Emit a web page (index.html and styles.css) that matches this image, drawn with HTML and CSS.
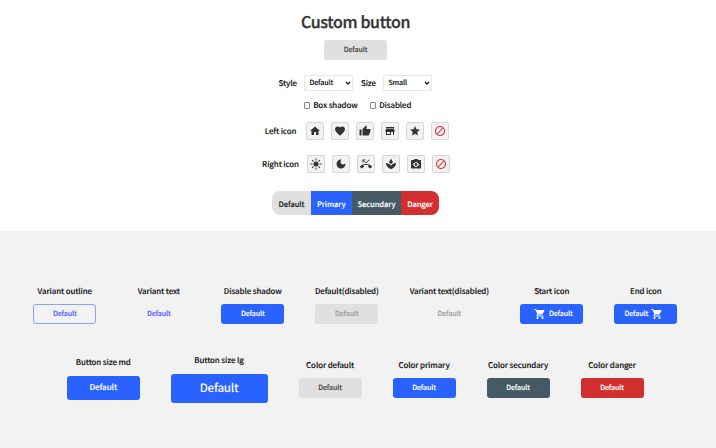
FILE: index.html
```html
<!DOCTYPE html>
<html lang="en">
<head>
<meta charset="utf-8">
<title>Custom button</title>
<link rel="stylesheet" href="styles.css">
</head>
<body>
<svg class="defs" aria-hidden="true">
  <symbol id="home" viewBox="0 0 24 24"><path d="M10 20v-6h4v6h5v-8h3L12 3 2 12h3v8z"/></symbol>
  <symbol id="heart" viewBox="0 0 24 24"><path d="M12 21.35l-1.45-1.32C5.4 15.36 2 12.28 2 8.5 2 5.42 4.42 3 7.5 3c1.74 0 3.41.81 4.5 2.09C13.09 3.81 14.76 3 16.5 3 19.58 3 22 5.42 22 8.5c0 3.78-3.4 6.86-8.55 11.54L12 21.35z"/></symbol>
  <symbol id="thumb" viewBox="0 0 24 24"><path d="M1 21h4V9H1v12zm22-11c0-1.1-.9-2-2-2h-6.31l.95-4.57.03-.32c0-.41-.17-.79-.44-1.06L14.17 1 7.59 7.59C7.22 7.95 7 8.45 7 9v10c0 1.1.9 2 2 2h9c.83 0 1.54-.5 1.84-1.22l3.02-7.05c.09-.23.14-.47.14-.73v-2z"/></symbol>
  <symbol id="store" viewBox="0 0 24 24"><path d="M20 4H4v2h16V4zm1 10v-2l-1-5H4l-1 5v2h1v6h10v-6h4v6h2v-6h1zm-9 4H6v-4h6v4z"/></symbol>
  <symbol id="star" viewBox="0 0 24 24"><path d="M12 17.27L18.18 21l-1.64-7.03L22 9.24l-7.19-.61L12 2 9.19 8.63 2 9.24l5.46 4.73L5.82 21z"/></symbol>
  <symbol id="block" viewBox="0 0 24 24"><path d="M12 2C6.48 2 2 6.48 2 12s4.480 10 10 10 10-4.480 10-10S17.520 2 12 2zM4 12c0-4.420 3.580-8 8-8 1.850 0 3.550.63 4.900 1.690L5.690 16.900C4.630 15.550 4 13.850 4 12zm8 8c-1.850 0-3.550-.63-4.900-1.690L18.310 7.100C19.370 8.450 20 10.150 20 12c0 4.420-3.580 8-8 8z"/></symbol>
  <symbol id="sun" viewBox="0 0 24 24"><circle cx="12" cy="12" r="5"/><path d="M11 1h2v4h-2zM11 19h2v4h-2zM1 11h4v2H1zM19 11h4v2h-4zM4.930 3.510l2.830 2.830-1.420 1.420-2.830-2.830zM17.660 16.240l2.830 2.830-1.420 1.420-2.830-2.830zM20.490 4.930l-2.830 2.830-1.420-1.420 2.830-2.830zM7.760 17.660l-2.830 2.830-1.420-1.420 2.830-2.830z"/></symbol>
  <symbol id="moon" viewBox="0 0 24 24"><path d="M12 3c-4.970 0-9 4.030-9 9s4.030 9 9 9 9-4.030 9-9c0-.46-.04-.92-.1-1.360-.98 1.370-2.580 2.260-4.400 2.260-2.980 0-5.400-2.420-5.400-5.400 0-1.810.89-3.420 2.260-4.400C12.920 3.040 12.460 3 12 3z"/></symbol>
  <symbol id="missed" viewBox="0 0 24 24"><path d="M6.500 5.500L12 11l7-7-1-1-6 6-4.500-4.500H11V3H5v6h1.500V5.500zm17.210 11.170C20.660 13.780 16.540 12 12 12 7.460 12 3.340 13.780.29 16.670c-.18.18-.29.43-.29.710s.11.530.29.710l2.480 2.480c.18.18.43.29.710.290.27 0 .52-.11.700-.28.79-.74 1.690-1.360 2.660-1.850.33-.16.560-.50.560-.90v-3.100C8.850 14.250 10.400 14 12 14s3.150.25 4.600.720v3.100c0 .39.23.74.56.90.98.49 1.870 1.120 2.670 1.850.18.18.43.28.700.28.28 0 .53-.11.710-.29l2.480-2.480c.18-.18.29-.43.290-.710s-.12-.52-.30-.70z"/></symbol>
  <symbol id="spa" viewBox="0 0 24 24"><path d="M15.490 9.630c-.18-2.790-1.310-5.510-3.430-7.630-2.140 2.140-3.320 4.860-3.550 7.630 1.280.68 2.460 1.560 3.490 2.630 1.030-1.060 2.210-1.940 3.490-2.630zM12 15.450C9.850 12.170 6.180 10 2 10c0 5.320 3.360 9.820 8.030 11.490.63.23 1.290.40 1.970.51.68-.12 1.330-.29 1.970-.51C18.640 19.820 22 15.320 22 10c-4.180 0-7.850 2.170-10 5.450z"/></symbol>
  <symbol id="camera" viewBox="0 0 24 24"><path fill-rule="evenodd" d="M20 4h-3.170L15 2H9L7.170 4H4c-1.100 0-2 .90-2 2v13c0 1.100.90 2 2 2h16c1.100 0 2-.90 2-2V6c0-1.100-.90-2-2-2zm-8 14c-2.800 0-5-2.200-5-5H4.500L8 9.500l3.500 3.500H9c0 1.650 1.350 3 3 3 .46 0 .90-.11 1.290-.29l1.110 1.110C13.700 17.250 12.880 18 12 18zm4-1.500L12.500 13H15c0-1.650-1.350-3-3-3-.46 0-.89.10-1.280.29L9.610 9.180C10.300 8.440 11.130 8 12 8c2.760 0 5 2.240 5 5h2.500L16 16.500z"/></symbol>
  <symbol id="cart" viewBox="0 0 24 24"><path d="M7 18c-1.100 0-1.990.90-1.990 2S5.900 22 7 22s2-.90 2-2-.90-2-2-2zM1 2v2h2l3.600 7.590-1.350 2.450c-.16.28-.25.61-.25.960 0 1.100.90 2 2 2h12v-2H7.420c-.14 0-.25-.11-.25-.25l.03-.12.90-1.630h7.450c.75 0 1.410-.41 1.750-1.030l3.580-6.490c.08-.14.12-.31.12-.48 0-.55-.45-1-1-1H5.210l-.94-2H1zm16 16c-1.100 0-1.990.90-1.990 2s.89 2 1.990 2 2-.90 2-2-.90-2-2-2z"/></symbol>
  <symbol id="chevron" viewBox="0 0 10 10"><path d="M1.500 3L5 6.700 8.500 3" fill="none" stroke="currentColor" stroke-width="2"/></symbol>
</svg>

<main class="playground">
  <h1>Custom button</h1>
  <button class="btn default">Default</button>

  <div class="selects">
    <span>Style</span>
    <div class="select">Default<svg><use href="#chevron"/></svg></div>
    <span>Size</span>
    <div class="select">Small<svg><use href="#chevron"/></svg></div>
  </div>

  <div class="checks">
    <label><i class="box"></i>Box shadow</label>
    <label><i class="box"></i>Disabled</label>
  </div>

  <div class="icons">
    <span>Left icon</span>
    <button><svg><use href="#home"/></svg></button>
    <button><svg><use href="#heart"/></svg></button>
    <button><svg><use href="#thumb"/></svg></button>
    <button><svg><use href="#store"/></svg></button>
    <button><svg><use href="#star"/></svg></button>
    <button class="none"><svg><use href="#block"/></svg></button>
  </div>
  <div class="icons second">
    <span>Right icon</span>
    <button><svg><use href="#sun"/></svg></button>
    <button><svg><use href="#moon"/></svg></button>
    <button><svg><use href="#missed"/></svg></button>
    <button><svg><use href="#spa"/></svg></button>
    <button><svg><use href="#camera"/></svg></button>
    <button class="none"><svg><use href="#block"/></svg></button>
  </div>

  <div class="colors">
    <button class="default">Default</button>
    <button class="primary">Primary</button>
    <button class="secondary">Secundary</button>
    <button class="danger">Danger</button>
  </div>
</main>

<section class="examples">
  <div class="row">
    <div class="item"><p>Variant outline</p><button class="btn outline">Default</button></div>
    <div class="item"><p>Variant text</p><button class="btn text">Default</button></div>
    <div class="item"><p>Disable shadow</p><button class="btn primary">Default</button></div>
    <div class="item"><p>Default(disabled)</p><button class="btn default off">Default</button></div>
    <div class="item wide"><p>Variant text(disabled)</p><button class="btn text off">Default</button></div>
    <div class="item"><p>Start icon</p><button class="btn primary start"><svg><use href="#cart"/></svg>Default</button></div>
    <div class="item"><p>End icon</p><button class="btn primary end">Default<svg><use href="#cart"/></svg></button></div>
  </div>
  <div class="row sizes">
    <div class="item"><p>Button size md</p><button class="btn primary md">Default</button></div>
    <div class="item"><p>Button size lg</p><button class="btn primary lg">Default</button></div>
    <div class="item"><p>Color default</p><button class="btn default">Default</button></div>
    <div class="item"><p>Color primary</p><button class="btn primary">Default</button></div>
    <div class="item"><p>Color secundary</p><button class="btn secondary">Default</button></div>
    <div class="item"><p>Color danger</p><button class="btn danger">Default</button></div>
  </div>
</section>
</body>
</html>
```

FILE: styles.css
```css
* { box-sizing: border-box; }

body {
  margin: 0;
  height: 448px;
  overflow: hidden;
  display: flex;
  flex-direction: column;
  background: #fff;
  color: #111;
  font: 500 7.9px/12px "Noto Sans CJK JP", sans-serif;
  letter-spacing: -0.09px;
  -webkit-text-stroke: 0.12px currentColor;
  text-rendering: geometricPrecision;
}

button, p, h1 { margin: 0; padding: 0; font: inherit; color: inherit; }
button { border: 0; white-space: nowrap; text-rendering: inherit; letter-spacing: inherit; }
svg { fill: currentColor; flex: none; }
.defs { display: none; }

.playground {
  height: 230.5px;
  flex: none;
  display: flex;
  flex-direction: column;
  align-items: center;
  padding: 9px 5px 0 0;
  border-top: 1px solid #fffcf3;
}

h1 {
  font-size: 16px;
  line-height: 22px;
  letter-spacing: -0.36px;
  -webkit-text-stroke-width: 0.3px;
  color: #333;
  margin-bottom: 8px;
}

.btn {
  display: flex;
  align-items: center;
  justify-content: center;
  width: 63px;
  height: 19.5px;
  border-radius: 3px;
  font-size: 7px;
}

.default { background: #e0e0e0; color: #444; }
.primary { background: #2962ff; color: #fff; }
.secondary { background: #455a64; color: #fff; }
.danger { background: #d32f2f; color: #fff; }
.outline { background: none; border: 1px solid #88a2fa; color: #4e60ff; }
.text { background: none; color: #4e60ff; }
.off { color: #9e9e9e; }

.selects {
  display: flex;
  align-items: center;
  gap: 7.5px;
  margin-top: 15px;
}
.selects span { padding-top: 3px; }
.select {
  width: 49px;
  height: 16px;
  display: flex;
  align-items: center;
  justify-content: space-between;
  padding: 1px 1px 0 4px;
  border: 1px solid #e8e8e8;
  border-radius: 1px;
  font-size: 7px;
}
.select svg { width: 6px; height: 6px; }

.checks {
  display: flex;
  gap: 12px;
  margin-top: 9px;
  padding-left: 4px;
}
.checks label { display: flex; align-items: center; gap: 3px; }
.box {
  width: 6.5px;
  height: 6.5px;
  border: 1px solid #8a8a8a;
  border-radius: 1px;
}

.icons {
  display: flex;
  align-items: center;
  gap: 7px;
  margin-top: 10px;
  padding-left: 3px;
}
.icons.second { margin-top: 15px; padding-left: 1px; }
.icons span { margin-right: 3px; padding-top: 2px; }
.icons.second span { margin-right: 1px; }
.icons button {
  width: 18px;
  height: 18px;
  display: grid;
  place-items: center;
  border: 1px solid #d6d6d6;
  border-radius: 2px;
  background: #f2f2f2;
  color: #333;
}
.icons svg { width: 12px; height: 12px; }
.icons .none { color: #dc3838; }

.colors {
  display: grid;
  grid-template-columns: 38.5px 41px 49.5px 37.5px;
  height: 24.5px;
  margin-top: 18px;
  border-radius: 8px;
  overflow: hidden;
}
.colors .default { color: #222; }
.colors button { font-size: 7.6px; padding-top: 4px; }

.examples {
  flex: 1;
  background: #f2f2f2;
  padding: 55px 5.4px 0 0;
}
.row { display: flex; justify-content: center; gap: 31px; }
.item {
  width: 63px;
  display: flex;
  flex-direction: column;
  align-items: center;
}
.item p { white-space: nowrap; margin-bottom: 6.5px; }
.item.wide { width: 80px; }
.start svg, .end svg { width: 12px; height: 12px; }
.start { gap: 3px; padding-left: 3px; }
.end { gap: 3px; padding-right: 4px; }

.sizes { align-items: center; margin-top: 31.5px; }
.sizes .item { width: auto; min-width: 63px; }
.sizes .item p { margin-inline: -10px; }
.md { width: 72.5px; height: 24.5px; font-size: 8.1px; }
.lg { width: 97px; height: 29px; font-size: 11.6px; letter-spacing: -0.25px; -webkit-text-stroke-width: 0; }
```
